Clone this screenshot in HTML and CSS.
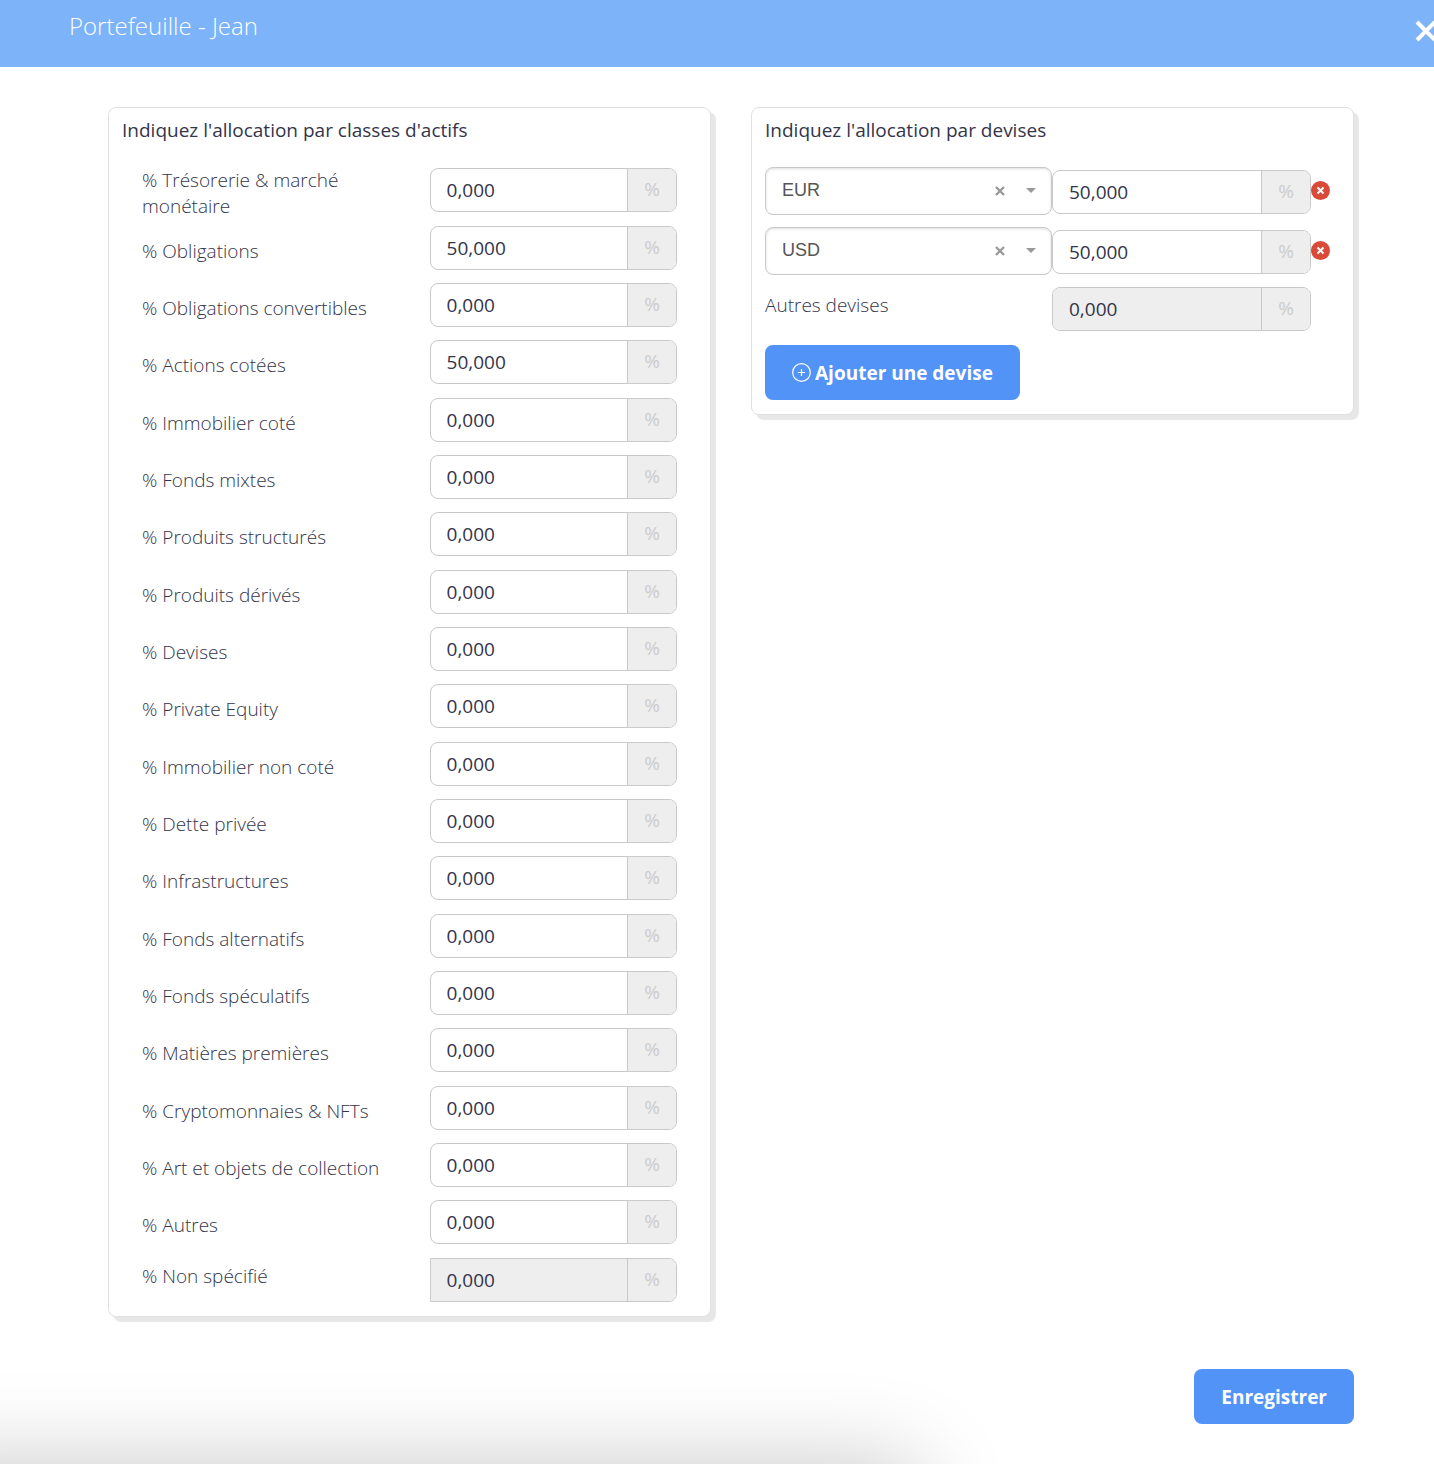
FILE: index.html
```html
<!DOCTYPE html>
<html lang="fr">
<head>
<meta charset="utf-8">
<meta name="viewport" content="width=device-width, initial-scale=1">
<title>Portefeuille - Jean</title>
<link rel="stylesheet" href="styles.css">
</head>
<body>
<header class="topbar">
  <h1 class="topbar-title">Portefeuille - Jean</h1>
  <button class="topbar-close" type="button" aria-label="Fermer">
    <svg width="22" height="22" viewBox="0 0 22 22" aria-hidden="true"><path d="M2 2L20 20M20 2L2 20" stroke="currentColor" stroke-width="4" fill="none"/></svg>
  </button>
</header>
<form class="content">
  <div class="cards">
    <section class="card">
      <h2 class="card-title">Indiquez l'allocation par classes d'actifs</h2>
      <div class="classes">
        <div class="class-row class-row-tall"><label for="c1">% Trésorerie &amp; marché monétaire</label><div class="field"><input id="c1" type="text" value="0,000"><span class="unit">%</span></div></div>
        <div class="class-row"><label for="c2">% Obligations</label><div class="field"><input id="c2" type="text" value="50,000"><span class="unit">%</span></div></div>
        <div class="class-row"><label for="c3">% Obligations convertibles</label><div class="field"><input id="c3" type="text" value="0,000"><span class="unit">%</span></div></div>
        <div class="class-row"><label for="c4">% Actions cotées</label><div class="field"><input id="c4" type="text" value="50,000"><span class="unit">%</span></div></div>
        <div class="class-row"><label for="c5">% Immobilier coté</label><div class="field"><input id="c5" type="text" value="0,000"><span class="unit">%</span></div></div>
        <div class="class-row"><label for="c6">% Fonds mixtes</label><div class="field"><input id="c6" type="text" value="0,000"><span class="unit">%</span></div></div>
        <div class="class-row"><label for="c7">% Produits structurés</label><div class="field"><input id="c7" type="text" value="0,000"><span class="unit">%</span></div></div>
        <div class="class-row"><label for="c8">% Produits dérivés</label><div class="field"><input id="c8" type="text" value="0,000"><span class="unit">%</span></div></div>
        <div class="class-row"><label for="c9">% Devises</label><div class="field"><input id="c9" type="text" value="0,000"><span class="unit">%</span></div></div>
        <div class="class-row"><label for="c10">% Private Equity</label><div class="field"><input id="c10" type="text" value="0,000"><span class="unit">%</span></div></div>
        <div class="class-row"><label for="c11">% Immobilier non coté</label><div class="field"><input id="c11" type="text" value="0,000"><span class="unit">%</span></div></div>
        <div class="class-row"><label for="c12">% Dette privée</label><div class="field"><input id="c12" type="text" value="0,000"><span class="unit">%</span></div></div>
        <div class="class-row"><label for="c13">% Infrastructures</label><div class="field"><input id="c13" type="text" value="0,000"><span class="unit">%</span></div></div>
        <div class="class-row"><label for="c14">% Fonds alternatifs</label><div class="field"><input id="c14" type="text" value="0,000"><span class="unit">%</span></div></div>
        <div class="class-row"><label for="c15">% Fonds spéculatifs</label><div class="field"><input id="c15" type="text" value="0,000"><span class="unit">%</span></div></div>
        <div class="class-row"><label for="c16">% Matières premières</label><div class="field"><input id="c16" type="text" value="0,000"><span class="unit">%</span></div></div>
        <div class="class-row"><label for="c17">% Cryptomonnaies &amp; NFTs</label><div class="field"><input id="c17" type="text" value="0,000"><span class="unit">%</span></div></div>
        <div class="class-row"><label for="c18">% Art et objets de collection</label><div class="field"><input id="c18" type="text" value="0,000"><span class="unit">%</span></div></div>
        <div class="class-row"><label for="c19">% Autres</label><div class="field"><input id="c19" type="text" value="0,000"><span class="unit">%</span></div></div>
        <div class="class-row class-row-rest"><label for="c20">% Non spécifié</label><div class="field field-square"><input id="c20" type="text" value="0,000" readonly><span class="unit">%</span></div></div>
      </div>
    </section>

    <section class="card">
      <h2 class="card-title">Indiquez l'allocation par devises</h2>
      <div class="currencies">
        <div class="currency-row">
          <div class="picker">
            <select aria-label="Devise 1"><option>EUR</option><option>USD</option></select>
            <button class="picker-clear" type="button" aria-label="Effacer la devise 1"><svg width="10" height="10" viewBox="0 0 10 10" aria-hidden="true"><path d="M1 1L9 9M9 1L1 9" stroke="currentColor" stroke-width="2.4" fill="none"/></svg></button>
            <svg class="picker-arrow" width="10" height="5" viewBox="0 0 10 5" aria-hidden="true"><path d="M0 0H10L5 5Z" fill="currentColor"/></svg>
          </div>
          <div class="field"><input type="text" value="50,000" aria-label="Part de la devise 1"><span class="unit">%</span></div>
          <button class="remove" type="button" aria-label="Supprimer la devise 1"><svg width="19" height="19" viewBox="0 0 19 19" aria-hidden="true"><circle cx="9.500" cy="9.500" r="9.500" fill="#da4a38"/><path d="M6.500 6.500L12.500 12.500M12.500 6.500L6.500 12.500" stroke="#fff" stroke-width="2" fill="none"/></svg></button>
        </div>
        <div class="currency-row">
          <div class="picker">
            <select aria-label="Devise 2"><option>EUR</option><option selected>USD</option></select>
            <button class="picker-clear" type="button" aria-label="Effacer la devise 2"><svg width="10" height="10" viewBox="0 0 10 10" aria-hidden="true"><path d="M1 1L9 9M9 1L1 9" stroke="currentColor" stroke-width="2.4" fill="none"/></svg></button>
            <svg class="picker-arrow" width="10" height="5" viewBox="0 0 10 5" aria-hidden="true"><path d="M0 0H10L5 5Z" fill="currentColor"/></svg>
          </div>
          <div class="field"><input type="text" value="50,000" aria-label="Part de la devise 2"><span class="unit">%</span></div>
          <button class="remove" type="button" aria-label="Supprimer la devise 2"><svg width="19" height="19" viewBox="0 0 19 19" aria-hidden="true"><circle cx="9.500" cy="9.500" r="9.500" fill="#da4a38"/><path d="M6.500 6.500L12.500 12.500M12.500 6.500L6.500 12.500" stroke="#fff" stroke-width="2" fill="none"/></svg></button>
        </div>
        <div class="currency-row currency-row-rest">
          <label for="d-rest">Autres devises</label>
          <div class="field"><input id="d-rest" type="text" value="0,000" readonly><span class="unit">%</span></div>
        </div>
      </div>
      <button class="btn" type="button">
        <svg width="19" height="19" viewBox="0 0 19 19" aria-hidden="true"><g fill="none" stroke="currentColor" stroke-width="1.200"><circle cx="9.500" cy="9.500" r="8.800"/><path d="M9.500 6V13M6 9.500H13"/></g></svg>
        Ajouter une devise
      </button>
    </section>
  </div>
  <div class="actions">
    <button class="btn" type="submit">Enregistrer</button>
  </div>
</form>
<div class="bottom-shade" aria-hidden="true"></div>
</body>
</html>
```

FILE: styles.css
```css
* {
  box-sizing: border-box;
}

body {
  margin: 0;
  min-height: 100vh;
  background: #fff;
  color: #34344a;
  font-family: "Open Sans", sans-serif;
  font-size: 19px;
  font-weight: 300;
  line-height: 26px;
}

button,
input,
select {
  font: inherit;
  color: inherit;
  margin: 0;
}

button {
  border: 0;
  padding: 0;
  background: none;
  cursor: pointer;
}

svg {
  display: block;
}

.topbar {
  display: flex;
  justify-content: space-between;
  align-items: flex-start;
  height: 67px;
  padding: 10px 0 0 69px;
  overflow: hidden;
  background: #7cb3f9;
  color: #fff;
}

.topbar-title {
  margin: 0;
  font-size: 24px;
  font-weight: 300;
  line-height: 32px;
}

.topbar-close {
  margin: 10px -3px 0 0;
}

.content {
  padding: 40px 80px 40px 108px;
}

.cards {
  display: grid;
  grid-template-columns: 1fr 1fr;
  align-items: start;
  gap: 40px;
}

.card {
  padding: 9px 13px 14px;
  border: 1px solid #e0e1e5;
  border-radius: 8px;
  background: #fff;
  box-shadow: 5px 5px 1px #e7e7e8;
}

.card-title {
  margin: 0 0 24px;
  font-size: 19px;
  font-weight: 400;
  line-height: 26px;
}

.classes {
  margin-bottom: -12px;
  padding: 0 20px;
}

.class-row {
  display: grid;
  grid-template-columns: 287fr 247fr;
  align-items: start;
  min-height: 57px;
}

.class-row:nth-child(3n + 1) {
  min-height: 58px;
}

.class-row label {
  padding: 13px 16px 0 0;
}

.class-row-tall label {
  padding-top: 0;
}

.class-row-rest label {
  padding-top: 6px;
}

.class-row .field {
  margin-top: 1px;
}

.field {
  display: flex;
  height: 44px;
  border: 1px solid #c9c9c9;
  border-radius: 8px;
  background: #fff;
  overflow: hidden;
}

.field-square {
  border-radius: 0 8px 8px 0;
}

.field input {
  flex: 1;
  min-width: 0;
  padding: 0 16px;
  border: 0;
  background: none;
  font-weight: 400;
}

.field input:read-only {
  background: #eee;
}

.unit {
  display: flex;
  flex: none;
  align-items: center;
  justify-content: center;
  width: 49px;
  padding-bottom: 2px;
  border-left: 1px solid #c9c9c9;
  background: #eee;
  color: #ccc;
  font-weight: 400;
}

.currencies {
  display: grid;
  gap: 12px;
  margin-bottom: 14px;
}

.currency-row {
  display: grid;
  grid-template-columns: 287fr 259fr 29px;
  align-items: center;
}

.currency-row .field {
  margin-top: 2px;
}

.currency-row-rest {
  align-items: start;
}

.currency-row-rest label {
  padding-top: 5px;
}

.currency-row-rest .field {
  margin-top: 0;
}

.remove {
  padding-bottom: 2px;
}

.picker {
  position: relative;
}

.picker select {
  display: block;
  width: 100%;
  height: 48px;
  padding: 0 64px 3px 16px;
  border: 1px solid #c9c9c9;
  border-radius: 8px;
  background: #fff;
  box-shadow: inset 0 1px 3px #ddd;
  color: #555;
  font-family: "Liberation Sans", Arial, sans-serif;
  font-size: 18px;
  font-weight: 400;
  appearance: none;
}

.picker-clear {
  position: absolute;
  top: 19px;
  right: 47px;
  color: #999;
}

.picker-arrow {
  position: absolute;
  top: 21px;
  right: 16px;
  color: #999;
  pointer-events: none;
}

.btn {
  display: flex;
  align-items: center;
  gap: 4px;
  height: 55px;
  padding: 0 27px;
  border-radius: 8px;
  background: #5293f8;
  color: #fff;
  font-weight: 700;
}

.actions {
  display: flex;
  justify-content: flex-end;
  margin-top: 52px;
}

/* soft shade rising from below the window */
.bottom-shade {
  position: fixed;
  top: 100%;
  left: -100px;
  width: calc(64vw + 100px);
  height: 200px;
  box-shadow: 0 0 90px rgba(0, 0, 0, 0.22);
  pointer-events: none;
}
```
